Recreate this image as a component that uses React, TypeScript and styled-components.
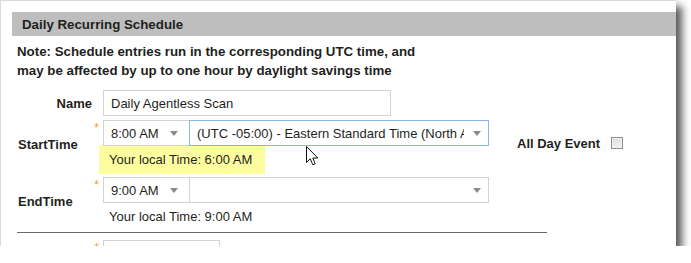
import React from "react";
import styled, { createGlobalStyle } from "styled-components";

const Global = createGlobalStyle`
  html, body { margin: 0; padding: 0; background: #fff; }
  body { font-family: "Liberation Sans", Arial, sans-serif; color: #1f1f22; }
`;

const Frame = styled.div`
  position: relative;
  background: #fff;
  border-top: 1px solid #dadada;
  border-left: 1px solid #dadada;
  box-shadow: 6px 6px 8px rgba(0, 0, 0, 0.66);
  overflow: hidden;
  padding: 11px 0 0 11px;
  box-sizing: content-box;
  width: 664px;
  height: 234px;
`;

const Header = styled.div`
  height: 24px;
  background: #bebebe;
  display: flex;
  align-items: center;
  padding-left: 10px;
  font-size: 13.3px;
  font-weight: bold;
  color: #222;
`;

const Note = styled.p`
  margin: 6px 0 0 5px;
  font-size: 13.3px;
  font-weight: bold;
  line-height: 19px;
`;

const Form = styled.div`
  display: flex;
  flex-direction: column;
  padding-left: 6px;
`;

const Row = styled.div<{ $top: number }>`
  display: flex;
  align-items: center;
  margin-top: ${(p) => p.$top}px;
`;

const Label = styled.div<{ $align?: string }>`
  width: 74px;
  font-size: 13px;
  font-weight: bold;
  text-align: ${(p) => p.$align || "left"};
  flex-shrink: 0;
`;

const Req = styled.div`
  width: 11px;
  align-self: flex-start;
  flex-shrink: 0;
  color: #f39c12;
  font-size: 12px;
  line-height: 12px;
  text-align: right;
  padding-right: 4px;
  box-sizing: border-box;
  margin-top: 2px;
`;

const Fields = styled.div`
  display: flex;
  flex-direction: column;
  width: 386px;
`;

const SelectRow = styled.div`
  display: flex;
`;

const TextInput = styled.div<{ $w: number }>`
  width: ${(p) => p.$w}px;
  height: 26px;
  box-sizing: border-box;
  border: 1px solid #d2d2d2;
  font-size: 13px;
  display: flex;
  align-items: center;
  padding-left: 7px;
  background: #fff;
`;

const Select = styled.div<{ $w: number; $focus?: boolean; $joined?: boolean; $arrowGap: number }>`
  width: ${(p) => p.$w}px;
  height: 26px;
  box-sizing: border-box;
  border: 1px solid ${(p) => (p.$focus ? "#84b6e8" : "#d2d2d2")};
  margin-left: ${(p) => (p.$joined ? "-1px" : "0")};
  font-size: 13px;
  display: flex;
  align-items: center;
  padding-left: 7px;
  padding-right: ${(p) => p.$arrowGap}px;
  background: #fff;
  position: relative;
  z-index: ${(p) => (p.$focus ? 1 : 0)};
`;

const SelectText = styled.span<{ $w: number }>`
  width: ${(p) => p.$w}px;
  overflow: hidden;
  white-space: nowrap;
  flex-shrink: 0;
`;

const Arrow = styled.span`
  margin-left: auto;
  width: 0;
  height: 0;
  border-left: 4px solid transparent;
  border-right: 4px solid transparent;
  border-top: 5px solid #8a8a8a;
`;

const LocalTime = styled.div<{ $hl?: boolean }>`
  font-size: 13px;
  line-height: 19px;
  margin-left: -4px;
  padding-left: 10px;
  width: 166px;
  box-sizing: border-box;
  padding-top: ${(p) => (p.$hl ? 5 : 4)}px;
  margin-top: ${(p) => (p.$hl ? -1 : 0)}px;
  padding-bottom: ${(p) => (p.$hl ? 5 : 0)}px;
  margin-bottom: ${(p) => (p.$hl ? -5 : 0)}px;
  background: ${(p) => (p.$hl ? "#fdfda0" : "transparent")};
`;

const AllDay = styled.div`
  display: flex;
  align-items: center;
  margin-left: 28px;
  margin-top: -3px;
  font-size: 13px;
  font-weight: bold;
  gap: 11px;
`;

const Check = styled.span`
  width: 12px;
  height: 12px;
  box-sizing: border-box;
  border: 1px solid #8f8f8f;
  background: linear-gradient(#dcdcdc, #f4f4f4);
  box-shadow: inset 0 0 0 1px #f0f0f0;
`;

const Rule = styled.div`
  width: 530px;
  height: 1px;
  background: #6a6a6a;
  margin-top: 6px;
  margin-left: -1px;
`;

const Cursor = styled.svg`
  position: absolute;
  left: 305px;
  top: 145px;
`;

export default function App() {
  return (
    <>
      <Global />
      <Frame>
        <Header>Daily Recurring Schedule</Header>
        <Note>
          Note: Schedule entries run in the corresponding UTC time, and
          <br />
          may be affected by up to one hour by daylight savings time
        </Note>
        <Form>
          <Row $top={10}>
            <Label $align="right">Name</Label>
            <Req />
            <TextInput $w={288}>Daily Agentless Scan</TextInput>
          </Row>
          <Row $top={4}>
            <Label>StartTime</Label>
            <Req>*</Req>
            <Fields>
              <SelectRow>
                <Select $w={87} $arrowGap={11}>
                  <SelectText $w={47}>8:00 AM</SelectText>
                  <Arrow />
                </Select>
                <Select $w={300} $focus $joined $arrowGap={7}>
                  <SelectText $w={267}>(UTC -05:00) - Eastern Standard Time (North America)</SelectText>
                  <Arrow />
                </Select>
              </SelectRow>
              <LocalTime $hl>Your local Time: 6:00 AM</LocalTime>
            </Fields>
            <AllDay>
              All Day Event
              <Check />
            </AllDay>
          </Row>
          <Row $top={8}>
            <Label>EndTime</Label>
            <Req>*</Req>
            <Fields>
              <SelectRow>
                <Select $w={87} $arrowGap={11}>
                  <SelectText $w={47}>9:00 AM</SelectText>
                  <Arrow />
                </Select>
                <Select $w={300} $joined $arrowGap={7}>
                  <SelectText $w={267}></SelectText>
                  <Arrow />
                </Select>
              </SelectRow>
              <LocalTime>Your local Time: 9:00 AM</LocalTime>
            </Fields>
          </Row>
          <Rule />
          <Row $top={7}>
            <Label />
            <Req>*</Req>
            <TextInput $w={117} />
          </Row>
        </Form>
        <Cursor width="13" height="21" viewBox="0 0 13 21">
          <path
            d="M0.5 0.5 L0.5 16.5 L4.3 12.8 L6.8 18.8 L9.2 17.8 L6.8 12 L11.8 12 Z"
            fill="#fff"
            stroke="#111"
            strokeWidth="1"
            strokeLinejoin="miter"
          />
        </Cursor>
      </Frame>
    </>
  );
}
